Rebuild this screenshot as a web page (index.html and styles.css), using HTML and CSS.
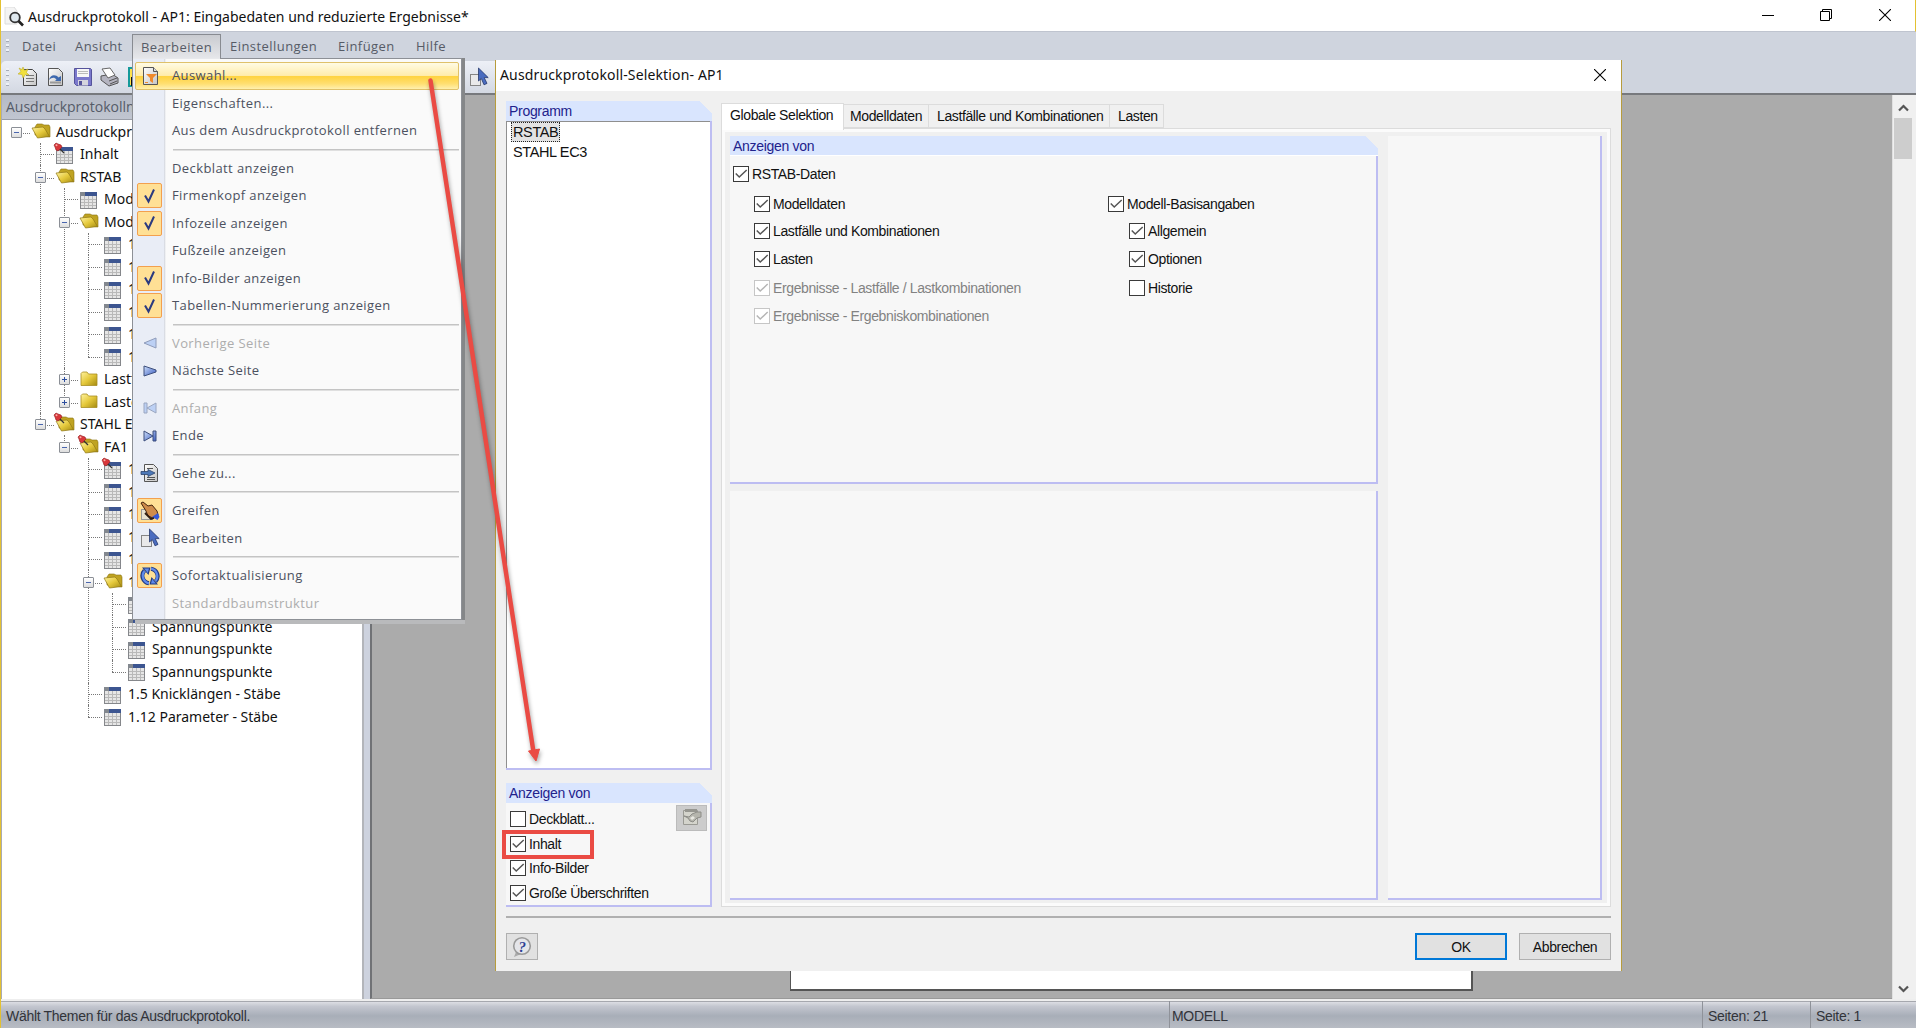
FILE: index.html
```html
<!DOCTYPE html>
<html lang="de">
<head>
    <meta charset="utf-8" />
    <title>Ausdruckprotokoll</title>
    <link rel="stylesheet" href="styles.css">
</head>
<body>
    <svg class="sprite" width="0" height="0">
        <defs>
            <linearGradient id="gold" x1="0" y1="0" x2="1" y2="1"><stop offset="0" stop-color="#fff3a0"/><stop offset=".5" stop-color="#e5c93c"/><stop offset="1" stop-color="#a48a10"/></linearGradient>
            <linearGradient id="blau" x1="0" y1="0" x2="1" y2="1"><stop offset="0" stop-color="#cfe0fb"/><stop offset="1" stop-color="#3a5cc0"/></linearGradient>
            <linearGradient id="grau" x1="0" y1="0" x2="1" y2="1"><stop offset="0" stop-color="#fff"/><stop offset="1" stop-color="#c4c4c4"/></linearGradient>
        </defs>
        <symbol id="offen" viewBox="0 0 20 16">
            <path d="M4 12V4l2-3h5l2 1h5l1 2v10z" fill="#bfa322" stroke="#8a7212" stroke-width=".6"/>
            <path d="M1 5l11-1 2 2 4.500 7.500-12 1.500z" fill="url(#gold)" stroke="#8f7714" stroke-width=".7"/>
        </symbol>
        <symbol id="ordner" viewBox="0 0 20 16">
            <path d="M2 14V2.500L3.500 1H8l1.500 2H18v11.500H2z" fill="url(#gold)" stroke="#a88e22" stroke-width=".8"/>
        </symbol>
        <symbol id="tabelle" viewBox="0 0 17 17">
            <rect x=".5" y=".5" width="16" height="16" fill="#e6e6e6" stroke="#85878b"/>
            <path d="M1 7.500h15M1 10.500h15M1 13.500h15M4.500 4v12M8.500 4v12M12.500 4v12" stroke="#b9b9b9" fill="none"/>
            <rect x="0" y="0" width="5" height="4" fill="#83888f"/>
            <rect x="5" y="0" width="12" height="4" fill="#3c5590"/>
        </symbol>
        <symbol id="nadel" viewBox="0 0 12 12">
            <path d="M6 6l5 5" stroke="#333" stroke-width="1.200"/>
            <path d="M1 3l2-2 2 1 3 1 1 2-4 4-2-1-1-3z" fill="#d8363a" stroke="#8e1a1e" stroke-width=".6"/>
            <circle cx="3.500" cy="3.200" r="1" fill="#ffb0a8"/>
        </symbol>
        <symbol id="haken" viewBox="0 0 16 16">
            <path d="M3 7.500l3.500 6L12 1.500" fill="none" stroke="#2b3a80" stroke-width="2"/>
        </symbol>
        <symbol id="auswahl" viewBox="0 0 20 20">
            <path d="M2.500 1.500h10l4 4v13h-14z" fill="url(#grau)" stroke="#555"/>
            <path d="M12.500 1.500v4h4" fill="#ddd" stroke="#555"/>
            <path d="M5 8h11l-4 4v5l-3-2v-3z" fill="#ef8a2c"/>
            <path d="M4 16.500h3" stroke="#ef8a2c"/>
        </symbol>
        <symbol id="zeiger" viewBox="0 0 20 20">
            <rect x="1.500" y="7.500" width="10" height="11" fill="#e9e9ea" stroke="#858585"/>
            <path d="M9.500 1v13l2.800-2.500 2.700 6.300 3-1.400-2.800-5.800h4z" fill="#4a6cc0" stroke="#26386d" stroke-width=".8"/>
        </symbol>
        <symbol id="gehezu" viewBox="0 0 20 20">
            <path d="M4.500 1.500h9l4 4v13h-13z" fill="url(#grau)" stroke="#555"/>
            <path d="M7 5.500h6M7 14.500h8M7 16.500h8" stroke="#555"/>
            <path d="M1 8.500h7V6.500l7 3.500-7 3.500v-2H1z" fill="#4e79b8" stroke="#2d456d" stroke-width=".8"/>
        </symbol>
        <symbol id="hand" viewBox="0 0 20 20">
            <rect x="1.500" y="8.500" width="11" height="10" fill="#e8e2d0" stroke="#999"/>
            <path d="M1 2l2-1 5 4 4-1 5 6 1 4-5 3-5-2-2-5z" fill="#cf8c4c" stroke="#45250f"/>
            <path d="M12 16l6-4 1.500 4-2 3z" fill="#3558d8"/>
            <path d="M5 12l6 6 3-1" stroke="#2f1c10" stroke-width="1.800" fill="none"/>
        </symbol>
        <symbol id="kreis" viewBox="0 0 20 20">
            <path d="M9 17.300A7.600 7.600 0 0 1 4.500 4.500M11 2.700A7.600 7.600 0 0 1 15.500 15.500" fill="none" stroke="#223a83" stroke-width="4"/>
            <path d="M2 1.500h8.500L8.500 9zM18 18.500H9.500l2-7.500z" fill="#223a83"/>
            <path d="M9 17.300A7.600 7.600 0 0 1 4.500 5M11 2.700A7.600 7.600 0 0 1 15.500 15" fill="none" stroke="#5f89ea" stroke-width="2.200"/>
            <path d="M4 2.500h5L7.800 7zM16 17.500h-5l1.200-4.500z" fill="#5f89ea"/>
        </symbol>
        <symbol id="zurueck" viewBox="0 0 14 12"><path d="M13 1v10L1 6z" fill="#bcd0f4" stroke="#8f9cba"/></symbol>
        <symbol id="vor" viewBox="0 0 14 12"><path d="M1 1v10l12-4V5z" fill="url(#blau)" stroke="#3d4f7c"/></symbol>
        <symbol id="anfang" viewBox="0 0 14 12"><path d="M1 1h3v10H1zM13 1v10L4 6z" fill="#bcd0f4" stroke="#9aa6c0"/></symbol>
        <symbol id="ende" viewBox="0 0 14 12"><path d="M1 1v10l9-5zM10 1h3v10h-3z" fill="url(#blau)" stroke="#3d4f7c"/></symbol>
        <symbol id="check" viewBox="0 0 16 16"><path d="M2 7.500l4 4L14.500 3.500" fill="none" stroke="currentColor" stroke-width="1.700"/></symbol>
        <symbol id="kreuz" viewBox="0 0 12 12"><path d="M0 0l12 12M12 0L0 12" stroke="#000" stroke-width="1.100"/></symbol>
    </svg>

    <div class="fenster">
        <header class="titel">
            <svg class="lupe" width="20" height="20" viewBox="0 0 20 20">
                <path d="M1 0h9l3 4v13H1z" fill="#f4f4f4" stroke="#dcdcdc"/>
                <circle cx="11" cy="10.500" r="4.800" fill="#dfe8ee" stroke="#333" stroke-width="1.800"/>
                <path d="M14.500 14l4.500 4.500" stroke="#222" stroke-width="2.600"/>
            </svg>
            <h1>Ausdruckprotokoll - AP1: Eingabedaten und reduzierte Ergebnisse*</h1>
            <svg class="min" width="12" height="12"><path d="M0 6.500h12" stroke="#000"/></svg>
            <svg class="max" width="12" height="12"><path d="M.5 2.500h9v9h-9zM2.500 2.500v-2h9v9h-2" fill="none" stroke="#000"/></svg>
            <svg class="zu" width="12" height="12"><use href="#kreuz"/></svg>
        </header>
        <nav class="menuleiste">
            <i class="griff"></i>
            <span class="m1">Datei</span>
            <span class="m2">Ansicht</span>
            <span class="aktiv">Bearbeiten</span>
            <span class="m4">Einstellungen</span>
            <span class="m5">Einfügen</span>
            <span>Hilfe</span>
        </nav>
        <div class="werkzeuge">
            <div class="leiste">
                <i class="griff"></i>
                <svg width="20" height="20" viewBox="0 0 20 20">
                    <path d="M5.500 2.500h9l4 4v12h-13z" fill="url(#grau)" stroke="#444"/>
                    <path d="M8 8.500h8M8 11.500h8M8 14.500h8" stroke="#777"/>
                    <path d="M5 0l1.500 3.500L10 2 8.500 5.500 11 8 7.500 7.500 5 11 4 7.500 0 7l3-2.500L1 1l3 1.500z" fill="#f1e03c" stroke="#b6a51c" stroke-width=".5"/>
                </svg>
                <svg width="20" height="20" viewBox="0 0 20 20">
                    <path d="M3.500 1.500h10l4 4v13h-14z" fill="url(#grau)" stroke="#555"/>
                    <path d="M5 15.500h11" stroke="#999" stroke-width="2"/>
                    <path d="M4 13c1-6 7-6 9.500-2.500L16 9v5h-6l1.500-1.500C9.500 10 7 10 4 13z" fill="#3e69ae"/>
                </svg>
                <svg width="20" height="20" viewBox="0 0 20 20">
                    <path d="M1.500 1.500h16l1 1v16h-15l-2-2z" fill="#7a78cc" stroke="#55539b"/>
                    <path d="M4 2h12v8H4z" fill="#f7f7f7"/>
                    <path d="M5 4.500h10M5 6.500h10" stroke="#bbb"/>
                    <path d="M5 13h10v5.500H5z" fill="#d5d5dd"/><path d="M6 14h3v4H6z" fill="#55539b"/>
                </svg>
                <svg width="20" height="20" viewBox="0 0 20 20">
                    <path d="M1 9l11-2 6 4v5l-9 3-8-6z" fill="#b4b4c0" stroke="#555"/>
                    <path d="M2 2l8-1 5 7-7 3z" fill="#fff" stroke="#666"/>
                    <path d="M9 14l8-3M10 17l7-3" stroke="#555"/>
                </svg>
                <svg width="20" height="20" viewBox="0 0 20 20"><path d="M1 1h14v18H1z" fill="#ffe14a" stroke="#159a9a" stroke-width="2"/><path d="M3 10h12v9H3z" fill="#111"/></svg>
                <svg class="edit" width="20" height="20"><use href="#zeiger"/></svg>
            </div>
        </div>

        <main class="mitte">
            <section class="navigator">
                <h2>Ausdruckprotokolln</h2>
                <ul class="baum">
                    <li><div class="zeile"><b class="minus"></b><svg class="f"><use href="#offen"/></svg>Ausdruckpr</div>
                    <ul>
                        <li><div class="zeile"><b></b><svg class="t"><use href="#tabelle"/></svg><svg class="n"><use href="#nadel"/></svg>Inhalt</div></li>
                        <li><div class="zeile"><b class="minus"></b><svg class="f"><use href="#offen"/></svg>RSTAB</div>
                        <ul>
                            <li><div class="zeile"><b></b><svg class="t"><use href="#tabelle"/></svg>Mod</div></li>
                            <li><div class="zeile"><b class="minus"></b><svg class="f"><use href="#offen"/></svg>Mod</div>
                            <ul>
                                <li><div class="zeile"><b></b><svg class="t"><use href="#tabelle"/></svg>1</div></li>
                                <li><div class="zeile"><b></b><svg class="t"><use href="#tabelle"/></svg>1</div></li>
                                <li><div class="zeile"><b></b><svg class="t"><use href="#tabelle"/></svg>1</div></li>
                                <li><div class="zeile"><b></b><svg class="t"><use href="#tabelle"/></svg>1</div></li>
                                <li><div class="zeile"><b></b><svg class="t"><use href="#tabelle"/></svg>1</div></li>
                                <li><div class="zeile"><b></b><svg class="t"><use href="#tabelle"/></svg>1</div></li>
                            </ul></li>
                            <li><div class="zeile"><b class="plus"></b><svg class="f"><use href="#ordner"/></svg>Lastf</div></li>
                            <li><div class="zeile"><b class="plus"></b><svg class="f"><use href="#ordner"/></svg>Laste</div></li>
                        </ul></li>
                        <li><div class="zeile"><b class="minus"></b><svg class="f"><use href="#offen"/></svg><svg class="n"><use href="#nadel"/></svg>STAHL E</div>
                        <ul>
                            <li><div class="zeile"><b class="minus"></b><svg class="f"><use href="#offen"/></svg><svg class="n"><use href="#nadel"/></svg>FA1</div>
                            <ul>
                                <li><div class="zeile"><b></b><svg class="t"><use href="#tabelle"/></svg><svg class="n"><use href="#nadel"/></svg>1</div></li>
                                <li><div class="zeile"><b></b><svg class="t"><use href="#tabelle"/></svg>1</div></li>
                                <li><div class="zeile"><b></b><svg class="t"><use href="#tabelle"/></svg>1</div></li>
                                <li><div class="zeile"><b></b><svg class="t"><use href="#tabelle"/></svg>1</div></li>
                                <li><div class="zeile"><b></b><svg class="t"><use href="#tabelle"/></svg>1</div></li>
                                <li><div class="zeile"><b class="minus"></b><svg class="f"><use href="#offen"/></svg>1</div>
                                <ul>
                                    <li><div class="zeile"><b></b><svg class="t"><use href="#tabelle"/></svg></div></li>
                                    <li><div class="zeile"><b></b><svg class="t"><use href="#tabelle"/></svg>Spannungspunkte</div></li>
                                    <li><div class="zeile"><b></b><svg class="t"><use href="#tabelle"/></svg>Spannungspunkte</div></li>
                                    <li><div class="zeile"><b></b><svg class="t"><use href="#tabelle"/></svg>Spannungspunkte</div></li>
                                </ul></li>
                                <li><div class="zeile"><b></b><svg class="t"><use href="#tabelle"/></svg>1.5 Knicklängen - Stäbe</div></li>
                                <li><div class="zeile"><b></b><svg class="t"><use href="#tabelle"/></svg>1.12 Parameter - Stäbe</div></li>
                            </ul></li>
                        </ul></li>
                    </ul></li>
                </ul>
            </section>
            <section class="arbeit"><div class="seite"></div></section>
            <aside class="rollen">
                <svg width="11" height="8"><path d="M1 6.500l4.500-4.500L10 6.500" fill="none" stroke="#555" stroke-width="2.200"/></svg>
                <i></i>
                <svg width="11" height="8"><path d="M1 1.500L5.500 6 10 1.500" fill="none" stroke="#555" stroke-width="2.200"/></svg>
            </aside>
        </main>

        <footer class="status">
            <span class="s1">Wählt Themen für das Ausdruckprotokoll.</span>
            <span class="s2">MODELL</span>
            <span class="s3">Seiten: 21</span>
            <span class="s4">Seite: 1</span>
        </footer>
    </div>

    <ul class="menue">
        <li class="hell"><svg class="ic"><use href="#auswahl"/></svg>Auswahl...</li>
        <li><i></i>Eigenschaften...</li>
        <li><i></i>Aus dem Ausdruckprotokoll entfernen</li>
        <li class="strich"></li>
        <li><i></i>Deckblatt anzeigen</li>
        <li><i class="an"><svg><use href="#haken"/></svg></i>Firmenkopf anzeigen</li>
        <li><i class="an"><svg><use href="#haken"/></svg></i>Infozeile anzeigen</li>
        <li><i></i>Fußzeile anzeigen</li>
        <li><i class="an"><svg><use href="#haken"/></svg></i>Info-Bilder anzeigen</li>
        <li><i class="an"><svg><use href="#haken"/></svg></i>Tabellen-Nummerierung anzeigen</li>
        <li class="strich"></li>
        <li class="aus"><i><svg class="k"><use href="#zurueck"/></svg></i>Vorherige Seite</li>
        <li><i><svg class="k"><use href="#vor"/></svg></i>Nächste Seite</li>
        <li class="strich"></li>
        <li class="aus"><i><svg class="k"><use href="#anfang"/></svg></i>Anfang</li>
        <li><i><svg class="k"><use href="#ende"/></svg></i>Ende</li>
        <li class="strich"></li>
        <li><i><svg class="ic"><use href="#gehezu"/></svg></i>Gehe zu...</li>
        <li class="strich"></li>
        <li><i class="an"><svg class="ic"><use href="#hand"/></svg></i>Greifen</li>
        <li><i><svg class="ic"><use href="#zeiger"/></svg></i>Bearbeiten</li>
        <li class="strich"></li>
        <li><i class="an"><svg class="ic"><use href="#kreis"/></svg></i>Sofortaktualisierung</li>
        <li class="aus"><i></i>Standardbaumstruktur</li>
    </ul>

    <div class="dialog">
        <header>
            <h2>Ausdruckprotokoll-Selektion- AP1</h2>
            <svg width="12" height="12"><use href="#kreuz"/></svg>
        </header>
        <div class="inhalt">
            <div class="links">
                <div class="gruppe programm">
                    <h3>Programm</h3>
                    <div class="liste">
                        <span class="gewaehlt">RSTAB</span>
                        <span>STAHL EC3</span>
                    </div>
                </div>
                <div class="gruppe anzeigen">
                    <h3>Anzeigen von</h3>
                    <label><b></b>Deckblatt...</label>
                    <label><b><svg><use href="#check"/></svg></b>Inhalt</label>
                    <label><b><svg><use href="#check"/></svg></b>Info-Bilder</label>
                    <label><b><svg><use href="#check"/></svg></b>Große Überschriften</label>
                    <button class="bild"><svg width="20" height="18" viewBox="0 0 20 18">
                        <path d="M1.500 2.500h14v14h-14z" fill="#d4d4cc" stroke="#9a9a94"/>
                        <path d="M3 1h12v3H3z" fill="#969690"/>
                        <path d="M2 8l5 1 3-3 5-2h4v5l-4 1-4 4-3-1-2-3z" fill="#b5b5ad" stroke="#8d8d88"/>
                        <path d="M8 10l3-2 2 2-3 2z" fill="#e8e8e2"/>
                    </svg></button>
                    <div class="rahmen"></div>
                </div>
            </div>
            <div class="rechts">
                <div class="reiter">
                    <span class="offen">Globale Selektion</span>
                    <span class="r2">Modelldaten</span>
                    <span class="r3">Lastfälle und Kombinationen</span>
                    <span class="r4">Lasten</span>
                </div>
                <div class="blatt">
                    <div class="gruppe oben">
                        <h3>Anzeigen von</h3>
                        <div class="spalten">
                            <div class="spalte">
                                <label class="wurzel"><b><svg><use href="#check"/></svg></b>RSTAB-Daten</label>
                                <label class="erste"><b><svg><use href="#check"/></svg></b>Modelldaten</label>
                                <label><b><svg><use href="#check"/></svg></b>Lastfälle und Kombinationen</label>
                                <label><b><svg><use href="#check"/></svg></b>Lasten</label>
                                <label class="aus"><b><svg><use href="#check"/></svg></b>Ergebnisse - Lastfälle / Lastkombinationen</label>
                                <label class="aus"><b><svg><use href="#check"/></svg></b>Ergebnisse - Ergebniskombinationen</label>
                            </div>
                            <div class="spalte zwei">
                                <label class="erste"><b><svg><use href="#check"/></svg></b>Modell-Basisangaben</label>
                                <label><b><svg><use href="#check"/></svg></b>Allgemein</label>
                                <label><b><svg><use href="#check"/></svg></b>Optionen</label>
                                <label><b></b>Historie</label>
                            </div>
                        </div>
                    </div>
                    <div class="gruppe unten"></div>
                    <div class="gruppe rand"></div>
                </div>
            </div>
        </div>
        <div class="knoepfe">
            <button class="hilfe"><svg width="22" height="22" viewBox="0 0 22 22">
                <path d="M5 16l-2 5 7-3z" fill="#aaa"/>
                <circle cx="11" cy="10" r="8.300" fill="#e4e5e9" stroke="#9a9a9a" stroke-width="1.600"/>
                <text x="11" y="15.500" text-anchor="middle" class="frage">?</text>
            </svg></button>
            <button class="ok">OK</button>
            <button class="abbrechen">Abbrechen</button>
        </div>
    </div>

    <svg class="pfeil" width="140" height="710" viewBox="420 70 140 710">
        <path d="M430.500 80.500L533.500 752" fill="none" stroke="#ea4b44" stroke-width="4.500" stroke-linecap="round"/>
        <path d="M528.500 751l11-2-3.500 12z" fill="#ea4b44" stroke="#ea4b44"/>
    </svg>
</body>
</html>
```
FILE: styles.css
```css
*
{
    box-sizing: border-box;
    margin: 0;
    padding: 0;
}

body
{
    width: 1916px;
    height: 1028px;
    overflow: hidden;
    position: relative;
    background: #cfd4de;
    color: #111;
    font-family: "Liberation Sans", Arial, sans-serif;
    font-size: 14px;
}

ul { list-style: none; }

svg { flex: none; }

.sprite { position: absolute; }

/* Hauptfenster */
.fenster
{
    display: flex;
    flex-direction: column;
    height: 1028px;
    border-left: 1px solid #e3c132;
}

.titel
{
    display: flex;
    align-items: center;
    height: 33px;
    padding: 0 24px 2px 3px;
    background: #fff;
    border-right: 1px solid #e3c132;
    border-bottom: 1px solid #bfc4cf;
}

.titel h1
{
    flex: 1;
    margin-left: 4px;
    padding-top: 4px;
    font: 14px/20px "Noto Sans", sans-serif;
}

.lupe { margin-top: 4px; }
.min { margin-right: 46px; }
.max { margin-right: 47px; }

.menuleiste
{
    display: flex;
    align-items: center;
    height: 29px;
    padding: 0 0 1px 5px;
    font: 13px/26px "Open Sans", sans-serif;
    letter-spacing: .45px;
    color: #565b66;
}

.griff
{
    width: 3px;
    height: 15px;
    background: repeating-linear-gradient(#eef1f6 0 2px, #a5abb8 2px 3px, transparent 3px 5px);
}

.m1 { width: 53px; margin-left: 13px; }
.m2 { width: 57px; }
.m4 { width: 108px; }
.m5 { width: 78px; }

.menuleiste .aktiv
{
    width: 89px;
    height: 26px;
    margin: 1px 9px 0 0;
    padding-left: 8px;
    line-height: 24px;
    background: linear-gradient(#c9cbd0, #e8e9ec);
    border: 1px solid #888b91;
    border-bottom: 0;
}

.werkzeuge
{
    height: 34px;
    border-bottom: 2px solid #77797d;
}

.leiste
{
    display: flex;
    align-items: center;
    gap: 7.500px;
    width: 620px;
    height: 32px;
    padding-left: 5px;
    background: linear-gradient(#edf0f7, #d3d8e2);
    border-radius: 5px 0 0 4px;
}

.leiste .griff { height: 18px; margin-right: 1px; }
.leiste .edit { margin-left: 314px; }

.mitte
{
    display: flex;
    height: 904px;
}

.navigator
{
    width: 369px;
    height: 904px;
    background: #fff;
    border-left: 1px solid #a9abb3;
    border-right: 6px solid #cdd2de;
    box-shadow: inset -2px 0 #b3b5ba;
    overflow: hidden;
}

.navigator h2
{
    height: 25px;
    padding-left: 4px;
    background: linear-gradient(#b4b9c5, #c1c6d1);
    border-bottom: 1px solid #9a9ea8;
    font: 14px/24px "Open Sans", sans-serif;
    color: #555b68;
}

.baum
{
    padding-left: 2px;
    font-family: "Noto Sans", sans-serif;
}

.baum ul { padding-left: 24px; }

.baum li
{
    position: relative;
}

.baum ul > li::before
{
    content: "";
    position: absolute;
    left: 12px;
    top: 0;
    bottom: 0;
    border-left: 1px dotted #777;
}

.baum ul > li:last-child::before
{
    bottom: auto;
    height: 12px;
}

.zeile
{
    display: flex;
    align-items: center;
    position: relative;
    height: 22.5px;
    white-space: nowrap;
}

.zeile b
{
    position: relative;
    flex: none;
    width: 11px;
    height: 11px;
    margin: 2px 12px 0 7px;
}

.zeile b::after
{
    content: "";
    position: absolute;
    left: 5px;
    top: 5px;
    width: 14px;
    border-top: 1px dotted #777;
}

.zeile .minus::after,
.zeile .plus::after { left: 11px; width: 7px; }

.zeile .minus, .zeile .plus
{
    background: linear-gradient(90deg, #4a66ae, #4a66ae) 2px 4px / 5px 1px no-repeat, linear-gradient(#fff, #ddd);
    border: 1px solid #8b8f96;
    border-radius: 1px;
}

.zeile .plus
{
    background: linear-gradient(#2e4f9f, #2e4f9f) 4px 2px / 1px 5px no-repeat, linear-gradient(#2e4f9f, #2e4f9f) 2px 4px / 5px 1px no-repeat, linear-gradient(#fff, #ddd);
}

.zeile .f { width: 20px; height: 16px; margin: 0 5px 0 -3px; }
.zeile .t { width: 17px; height: 17px; margin: 3px 7px 0 -2px; }
.zeile .n { position: absolute; left: 25px; top: -1px; width: 12px; height: 12px; }

.arbeit
{
    display: flex;
    align-items: flex-end;
    flex: 1;
    background: #ababab;
    border-left: 2px solid #707276;
    border-bottom: 1px solid #999;
}

.seite
{
    width: 683px;
    height: 40px;
    margin: 0 0 7px 418px;
    background: #fff;
    border: 1px solid #555;
    border-width: 1px 2px 2px 1px;
}

.rollen
{
    display: flex;
    flex-direction: column;
    align-items: center;
    width: 24px;
    padding: 9px 3px 6px 0;
    background: #f0f0f0;
    border-left: 1px solid #e0e0e0;
}

.rollen i
{
    width: 18px;
    height: 41px;
    margin: 6px 0 auto;
    background: #cdcdcd;
}

.status
{
    display: flex;
    height: 29px;
    border-top: 2px solid #eee;
    box-shadow: inset 0 1px #a6a8ae;
    background: linear-gradient(#e2e3e8, #c3c6cf 20%, #a8aeb8 55%, #b8bcc4);
    line-height: 31px;
    letter-spacing: -.3px;
    color: #32343a;
}

.status .s1 { width: 1168px; padding-left: 5px; }
.status .s2 { width: 533px; border-left: 1px solid #8f9299; padding-left: 2px; }
.status .s3 { width: 108px; border-left: 1px solid #8f9299; padding-left: 5px; }
.status .s4 { border-left: 1px solid #8f9299; padding-left: 5px; }

/* Menü Bearbeiten */
.menue
{
    position: absolute;
    left: 132px;
    top: 58px;
    width: 330px;
    height: 562px;
    padding-top: 3px;
    background: linear-gradient(90deg, #e9edf6 31px, #cfd3dc 31px, #fafafa 33px);
    border: 1px solid #8d9096;
    box-shadow: 3px 0 #858789, 3px 4px #b9babc;
    font: 13px/27px "Open Sans", sans-serif;
    letter-spacing: .4px;
    color: #4c5160;
}

.menue::before
{
    content: "";
    position: absolute;
    left: 0;
    top: -1px;
    width: 87px;
    height: 1px;
    background: #e8e9ec;
}

.menue li
{
    display: flex;
    align-items: center;
    height: 27.5px;
}

.menue i
{
    display: flex;
    align-items: center;
    justify-content: center;
    width: 25px;
    height: 25px;
    margin: 0 10px 0 4px;
    border-radius: 2px;
}

.menue .an
{
    background: #ffe095;
    border: 1px solid #f3a04e;
}

.menue i svg { width: 16px; height: 16px; }
.menue .ic, .menue i .ic { width: 20px; height: 20px; }
.menue i .k { width: 14px; height: 12px; }
.menue .aus { color: #adadad; }

.menue .hell
{
    margin: 0 2px;
    padding-left: 5px;
    background: linear-gradient(#fffbe4, #ffecab 48%, #ffd340 52%, #ffdf72 80%, #fff0ae);
    border: 1px solid #dfc16b;
    border-radius: 2px;
}

.menue .hell svg { margin-right: 11px; }

.menue .strich
{
    height: 10px;
    margin: 0 2px 0 40px;
    background: linear-gradient(#c4c4c4, #c4c4c4) 0 4px / 100% 1.5px no-repeat;
}

/* Dialog */
.dialog
{
    position: absolute;
    left: 495px;
    top: 60px;
    width: 1127px;
    height: 911px;
    background: #f0f0f0;
    border: 1px solid #b79c3c;
    border-width: 0 1px;
    letter-spacing: -.38px;
}

.dialog header
{
    display: flex;
    align-items: center;
    justify-content: space-between;
    height: 31px;
    padding: 0 15px 1px 4px;
    background: #fff;
}

.dialog header h2
{
    font: 14px/28px "Noto Sans", sans-serif;
    letter-spacing: .14px;
}

.inhalt
{
    display: flex;
    gap: 10px;
    height: 827px;
    margin: 0 10px;
    padding: 10px 0;
    border-bottom: 2px solid #b0b0b0;
}

.links
{
    display: flex;
    flex-direction: column;
    gap: 13px;
    width: 206px;
}

.gruppe
{
    position: relative;
    background: #f7f7f7;
    border: 2px solid #bdbdf2;
    border-width: 0 2px 2px 0;
}

.gruppe h3
{
    height: 20px;
    margin-right: -2px;
    padding-left: 3px;
    background: linear-gradient(225deg, #f0f0f0 9px, #d9e5fe 9px);
    position: relative;
    font-weight: normal;
    font-size: 14px;
    line-height: 20px;
    letter-spacing: -.3px;
    color: #22228c;
}

.programm { height: 670px; }

.liste
{
    height: 647px;
    padding: 0 4px;
    background: #fff;
    border: 1px solid #8f8f8f;
    border-width: 1px 0 0 1px;
}

.liste span
{
    display: block;
    width: max-content;
    height: 20px;
    padding: 0 2px;
    font-size: 14.500px;
    line-height: 20px;
}

.liste .gewaehlt
{
    background: #e3e3e3;
    border: 1px dotted #222;
    padding: 0 1px;
    line-height: 18px;
}

.anzeigen { height: 124px; }

label
{
    display: flex;
    align-items: center;
    white-space: nowrap;
}

label b
{
    flex: none;
    width: 16px;
    height: 16px;
    margin-right: 3px;
    background: #fff;
    border: 1px solid #3a3a3a;
    color: #555;
}

label b svg
{
    display: block;
    width: 14px;
    height: 14px;
}

label.aus { color: #828282; }
label.aus b { border-color: #c6c6c6; color: #b5b5b5; }

.anzeigen label { height: 24.600px; margin-left: 4px; }
.anzeigen h3 { margin-bottom: 4px; }

.bild
{
    position: absolute;
    right: 3px;
    top: 22px;
    width: 31px;
    height: 26px;
    background: #cccccc;
    border: 1px solid #bbb;
}

.rahmen
{
    position: absolute;
    left: -4px;
    top: 47px;
    width: 92px;
    height: 29px;
    border: 4px solid #ea4b44;
}

.rechts
{
    flex: 1;
    padding-top: 1px;
}

.reiter
{
    display: flex;
    align-items: flex-end;
    height: 26px;
    margin-left: -1px;
}

.reiter span
{
    height: 24px;
    padding-left: 6px;
    border: 1px solid #dcdcdc;
    border-left: 0;
    line-height: 23px;
}

.reiter .offen
{
    position: relative;
    width: 123px;
    height: 27px;
    margin-bottom: -2px;
    padding-left: 8px;
    background: #fff;
    border-left: 1px solid #dcdcdc;
    border-bottom: 0;
    line-height: 22px;
}

.r2 { width: 85px; }
.reiter .r3 { width: 181px; padding-left: 8px; }
.reiter .r4 { width: 54px; padding-left: 8px; }

.blatt
{
    display: grid;
    grid-template-columns: 648px 214px;
    grid-template-rows: 348px 409px;
    column-gap: 10px;
    row-gap: 7px;
    height: 779px;
    margin-left: -1px;
    padding: 7px 6px 7px 8px;
    border: 1px solid #dcdcdc;
    box-shadow: inset 0 0 0 3px #fbfbfb;
}

.rand
{
    grid-column: 2;
    grid-row: 1 / 3;
}

.oben h3 { border-bottom: 1px solid #fff; }

.spalten { display: grid; grid-template-columns: 354px 1fr; }

.spalte label { height: 28.500px; margin-left: 24px; }
.spalte .wurzel { height: 32px; margin: 2px 0 0 3px; }
.spalte.zwei { padding-top: 34px; }
.spalte label.erste { margin: 0 0 -2px 24px; }
.zwei label { margin-left: 45px; }

.knoepfe
{
    display: flex;
    height: 53px;
    padding: 15px 10px 0 10px;
}

.knoepfe button
{
    height: 27px;
    background: #e1e1e1;
    border: 1px solid #b0b0b0;
    font: 14px "Liberation Sans", Arial, sans-serif;
    letter-spacing: -.35px;
    color: #111;
}

.knoepfe .hilfe { width: 32px; margin-right: auto; }
.hilfe svg { display: block; margin: 1px auto 0; }

.frage
{
    font: bold italic 15px "Liberation Serif", serif;
    fill: #2b3f94;
}

.knoepfe .ok
{
    width: 92px;
    margin-right: 12px;
    border: 2px solid #0078d7;
}

.knoepfe .abbrechen { width: 92px; }

.pfeil
{
    position: absolute;
    left: 420px;
    top: 70px;
    filter: drop-shadow(1px 3px 2px rgba(0,0,0,.35));
}
```
